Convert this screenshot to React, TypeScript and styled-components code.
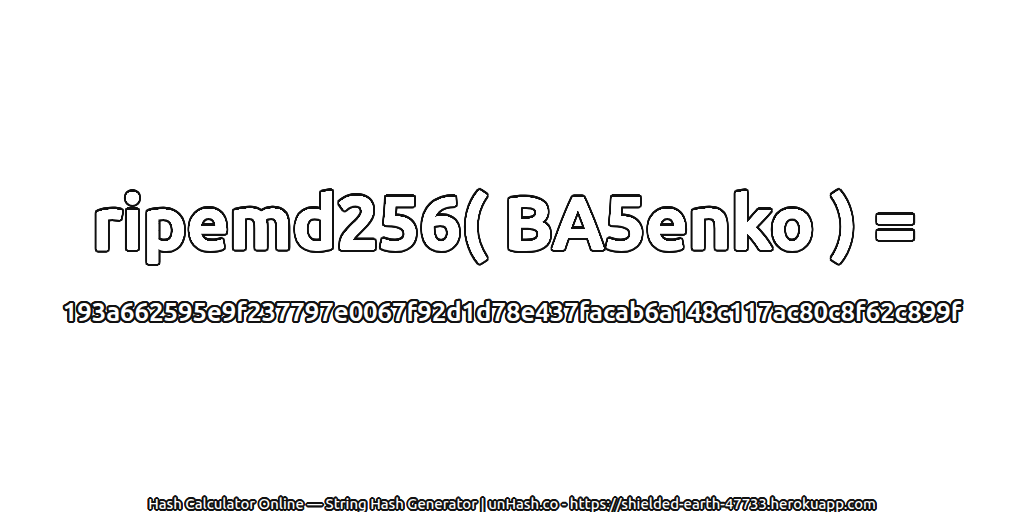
import React from 'react';
import styled, { createGlobalStyle } from 'styled-components';

const Global = createGlobalStyle`
  html, body { margin: 0; padding: 0; background: #fff; }
`;

// round outline: rings of hard shadows, the first ones paint on top
const ring = (r: number, color: string) =>
  Array.from({ length: 24 }, (_, i) => {
    const a = (i / 24) * Math.PI * 2;
    return `${(Math.cos(a) * r).toFixed(2)}px ${(Math.sin(a) * r).toFixed(2)}px 0 ${color}`;
  }).join(', ');

// four diagonal offsets, these keep the corners of the outline from going too soft
const corners = (d: number, color: string) =>
  [[d, d], [-d, d], [d, -d], [-d, -d]].map(([x, y]) => `${x}px ${y}px 0 ${color}`).join(', ');

const Page = styled.div`
  width: 1024px;
  height: 512px;
  display: flex;
  flex-direction: column;
  align-items: center;
  font-family: "Ubuntu", "Noto Sans", "DejaVu Sans", sans-serif;
  color: #fff;
  overflow: hidden;
`;

const Title = styled.div`
  margin-top: 177px;
  padding-right: 16px;
  font-size: 73.6px;
  line-height: 90px;
  font-weight: 700;
  white-space: nowrap;
  text-shadow: ${ring(0.5, '#fff')}, ${ring(2.6, '#111')}, ${ring(1.6, '#111')}, ${corners(2.3, '#111')};
`;

const Hash = styled.div`
  margin-top: 27px;
  font-size: 25.7px;
  line-height: 36px;
  font-weight: 700;
  white-space: nowrap;
  text-shadow: ${ring(2, '#111')}, ${ring(1, '#111')};
`;

const Footer = styled.div`
  margin-top: auto;
  font-size: 14.9px;
  line-height: 16px;
  font-weight: 500;
  white-space: nowrap;
  text-shadow: ${ring(1.7, '#111')}, ${ring(0.9, '#111')};
`;

export default function App() {
  return (
    <Page>
      <Global />
      <Title>ripemd256( BA5enko ) =</Title>
      <Hash>193a662595e9f237797e0067f92d1d78e437facab6a148c117ac80c8f62c899f</Hash>
      <Footer>Hash Calculator Online — String Hash Generator | unHash.co - https://shielded-earth-47733.herokuapp.com</Footer>
    </Page>
  );
}
